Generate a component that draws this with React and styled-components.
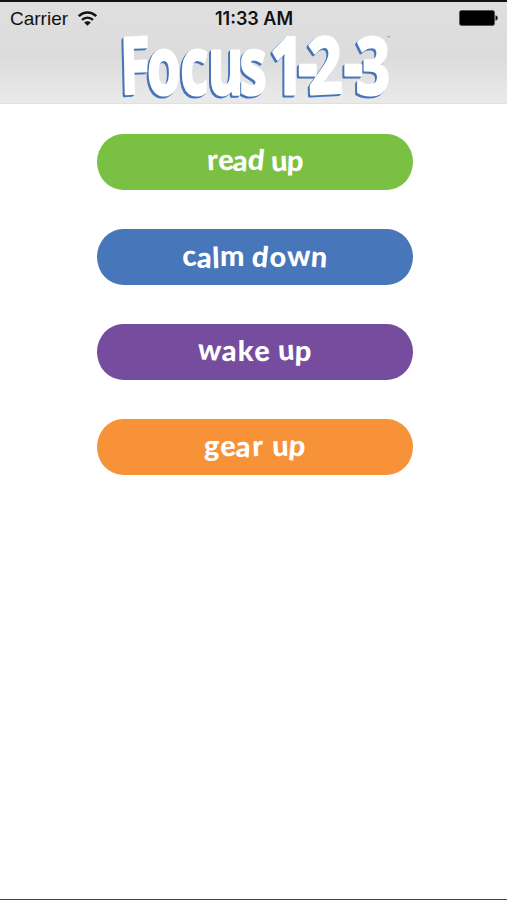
import styled, { createGlobalStyle } from 'styled-components';

const GlobalStyle = createGlobalStyle`
  * {
    box-sizing: border-box;
  }
  body {
    margin: 0;
    background: #fff;
    font-family: "Liberation Sans", Arial, sans-serif;
  }
`;

const ScreenStyles = styled.div`
  display: flex;
  flex-direction: column;
  height: 900px;
  overflow: hidden;
  border-top: 2px solid #151313;
  border-bottom: 1px solid #444;
`;

const HeaderStyles = styled.header`
  height: 102px;
  background: linear-gradient(#dfdfdf, #dcdcdc 55%, #e9e9e9 96%);
  border-bottom: 1px solid #e0e0e0;
`;

const StatusBarStyles = styled.div`
  display: grid;
  grid-template-columns: 1fr auto 1fr;
  align-items: center;
  height: 32px;
  padding: 0 9px 0 10px;
  font-size: 19px;
  line-height: 32px;
  color: #111;
  .carrier {
    display: flex;
    align-items: center;
    gap: 10px;
  }
  .time {
    padding-top: 1px;
    font-family: Inter, sans-serif;
    font-size: 18px;
    font-weight: 600;
  }
  .battery {
    justify-self: end;
  }
  svg {
    display: block;
    margin-top: -1px;
  }
`;

const LogoStyles = styled.svg`
  display: block;
  width: 290px;
  height: 70px;
  margin: -2px auto 0;
  overflow: visible;
  .lettering {
    filter: drop-shadow(-1px 1px 0 #4674b9) drop-shadow(-1px 1px 0 #4674b9);
  }
  text {
    font-family: "Open Sans", sans-serif;
    font-weight: 700;
    font-size: 78px;
    fill: #fff;
    stroke: #fff;
    stroke-width: 3px;
    stroke-linejoin: round;
  }
  .mark {
    font-size: 4px;
    fill: #777;
    stroke: none;
  }
`;

const MenuStyles = styled.nav`
  display: flex;
  flex-direction: column;
  align-items: center;
  gap: 39px;
  padding: 30px 0 0 3px;
`;

const MenuButton = styled.button`
  display: block;
  width: 316px;
  height: 56px;
  padding: ${props => props.$drop}px 0 5px;
  border: 0;
  border-radius: 26px / 28px;
  background: ${props => props.$color};
  color: #fff;
  font-family: Lato, sans-serif;
  font-size: 29px;
  font-weight: 900;
  line-height: 48px;
  letter-spacing: ${props => props.$spacing}px;
  white-space: pre;
`;

const Label = styled.span`
  display: flex;
  justify-content: center;
  height: 48px;
`;

const Letter = styled.span`
  display: block;
  transform: translateY(${props => props.$dy}px) rotate(${props => props.$tilt}deg);
`;

// each letter sits a little off the baseline, [dy, tilt]
const items = [
  { label: 'read up', color: '#7ac143', drop: 0, spacing: -0.2, letters: [[-1, -3], [-1, -4], [0, 4], [-1, 6], [0, 0], [0, -3], [0, 3]] },
  { label: 'calm down', color: '#4776ba', drop: 3, spacing: 0.5, letters: [[-1, -5], [1, 3], [1, -2], [-1, 0], [0, 0], [0, 6], [0, 0], [-1, -2], [0, 4]] },
  { label: 'wake up', color: '#754c9e', drop: 2, spacing: 0.6, letters: [[-2, 4], [-1, 2], [-1, 0], [-1, -5], [0, 0], [-2, -3], [-1, 2]] },
  { label: 'gear up', color: '#f79239', drop: 2, spacing: 0.8, letters: [[-1, 0], [-1, -5], [0, 4], [-1, -2], [0, 0], [-1, -2], [-1, 6]] },
];

function Wifi() {
  return (
    <svg width="19" height="15" viewBox="0 0 19 15" fill="none" stroke="#111" strokeWidth="2.4">
      <path d="M0.8 5.2C5.8 0.2 13.2 0.2 18.2 5.2" />
      <path d="M4 8.9C7.2 5.8 11.8 5.8 15 8.9" />
      <path d="M9.5 14.7L6.2 11.5C8.2 9.8 10.8 9.8 12.8 11.5Z" fill="#111" stroke="none" />
    </svg>
  );
}

function Battery() {
  return (
    <svg className="battery" width="39" height="16" viewBox="0 0 39 16">
      <rect x="0.5" y="0.5" width="35" height="15" rx="2" fill="#000" stroke="#555" />
      <path d="M36.5 5.3C39.4 6 39.4 10 36.5 10.7Z" fill="#111" />
    </svg>
  );
}

function Logo() {
  return (
    <LogoStyles viewBox="108 32 290 70">
      <g className="lettering">
        <text
          transform="scale(0.69 1)"
          x="174 212 260 300 346"
          y="94 94 94 94 94"
          rotate="-2 0 0 0 0"
        >
          Focus
        </text>
        <text
          transform="scale(0.76 1)"
          x="354 391 405 451 467"
          y="94 91 94 91 94"
          rotate="0 0 -2 0 0"
        >
          1-2-3
        </text>
      </g>
      <text className="mark" x="386" y="39">™</text>
    </LogoStyles>
  );
}

export default function App() {
  return (
    <ScreenStyles>
      <GlobalStyle />
      <HeaderStyles>
        <StatusBarStyles>
          <div className="carrier">
            <span>Carrier</span>
            <Wifi />
          </div>
          <span className="time">11:33 AM</span>
          <Battery />
        </StatusBarStyles>
        <Logo />
      </HeaderStyles>
      <MenuStyles>
        {items.map(item => (
          <MenuButton key={item.label} $color={item.color} $drop={item.drop} $spacing={item.spacing}>
            <Label>
              {item.label.split('').map((char, i) => (
                <Letter key={i} $dy={item.letters[i][0]} $tilt={item.letters[i][1]}>{char}</Letter>
              ))}
            </Label>
          </MenuButton>
        ))}
      </MenuStyles>
    </ScreenStyles>
  );
}
